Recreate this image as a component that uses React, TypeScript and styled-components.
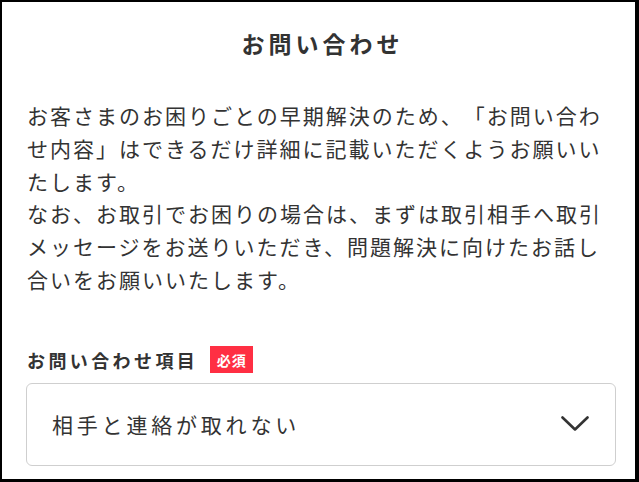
import React from 'react';
import styled, { createGlobalStyle } from 'styled-components';

const GlobalStyle = createGlobalStyle`
  html, body {
    margin: 0;
    padding: 0;
    background: #fff;
  }
  * {
    box-sizing: border-box;
  }
`;

const Frame = styled.div`
  width: 639px;
  height: 482px;
  border-style: solid;
  border-color: #000;
  border-width: 2px 4px 3px 2px;
  background: #fff;
  overflow: hidden;
  font-family: 'Noto Sans CJK JP', 'Noto Sans', sans-serif;
  color: #333;
  text-spacing-trim: space-all;
`;

const Header = styled.div`
  height: 83px;
  display: flex;
  align-items: center;
  justify-content: center;
`;

const Title = styled.h1`
  margin: 0;
  padding-left: 8px;
  font-size: 23px;
  font-weight: 700;
  letter-spacing: 4px;
  line-height: 1;
  color: #333;
`;

const Body = styled.div`
  padding: 0 25px;
`;

const Notice = styled.p`
  margin: 14px 0 0;
  font-size: 21px;
  line-height: 32.8px;
  letter-spacing: 2px;
  color: #333;
`;

const NoticeLine = styled.span`
  display: block;
  white-space: nowrap;
`;

const Field = styled.div`
  margin-top: 50px;
  display: flex;
  flex-direction: column;
  gap: 9px;
`;

const LabelRow = styled.div`
  height: 28px;
  display: flex;
  align-items: center;
  gap: 12px;
`;

const Label = styled.label`
  font-size: 18px;
  font-weight: 700;
  letter-spacing: 3.4px;
  color: #333;
`;

const Badge = styled.span`
  display: inline-flex;
  align-items: center;
  justify-content: center;
  width: 43px;
  height: 27px;
  background: #ff2f43;
  color: #fff;
  font-size: 14px;
  font-weight: 700;
  letter-spacing: 1px;
`;

const SelectBox = styled.button`
  width: 590px;
  height: 83px;
  margin-left: -1px;
  padding: 0 26px 0 25px;
  display: flex;
  align-items: center;
  justify-content: space-between;
  background: #fff;
  border: 1px solid #cfcfcf;
  border-radius: 6px;
  font-family: inherit;
  font-size: 21px;
  letter-spacing: 3.8px;
  color: #333;
  text-align: left;
  cursor: pointer;
`;

const Chevron = () => (
  <svg width="28" height="16" viewBox="0 0 28 16" fill="none">
    <path d="M1.5 1.5 L14 13.5 L26.5 1.5" stroke="#333" strokeWidth="2.6" strokeLinecap="round" strokeLinejoin="round" />
  </svg>
);

const noticeLines = [
  'お客さまのお困りごとの早期解決のため、「お問い合わ',
  'せ内容」はできるだけ詳細に記載いただくようお願いい',
  'たします。',
  'なお、お取引でお困りの場合は、まずは取引相手へ取引',
  'メッセージをお送りいただき、問題解決に向けたお話し',
  '合いをお願いいたします。',
];

const App = () => {
  return (
    <>
      <GlobalStyle />
      <Frame>
        <Header>
          <Title>お問い合わせ</Title>
        </Header>
        <Body>
          <Notice>
            {noticeLines.map((line) => (
              <NoticeLine key={line}>{line}</NoticeLine>
            ))}
          </Notice>
          <Field>
            <LabelRow>
              <Label>お問い合わせ項目</Label>
              <Badge>必須</Badge>
            </LabelRow>
            <SelectBox type="button">
              <span>相手と連絡が取れない</span>
              <Chevron />
            </SelectBox>
          </Field>
        </Body>
      </Frame>
    </>
  );
};

export default App;
